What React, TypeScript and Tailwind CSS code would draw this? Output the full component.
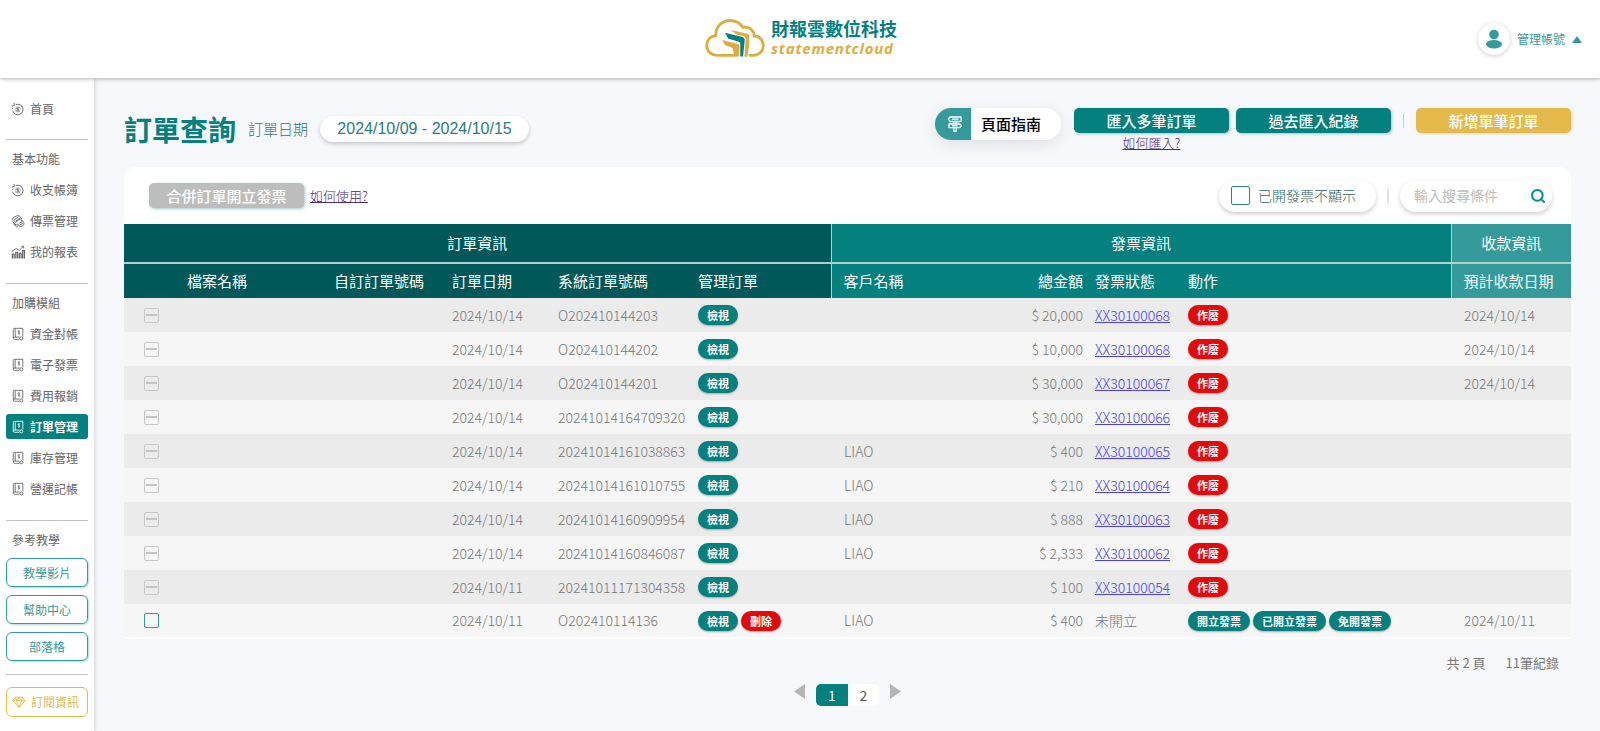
import type { ReactNode } from "react"
import { Search } from "lucide-react"

type Order = {
  date: string
  orderNo: string
  customer?: string
  amount: string
  invoice?: string
  payDate?: string
}

const orders: Order[] = [
  { date: "2024/10/14", orderNo: "O202410144203", amount: "$ 20,000", invoice: "XX30100068", payDate: "2024/10/14" },
  { date: "2024/10/14", orderNo: "O202410144202", amount: "$ 10,000", invoice: "XX30100068", payDate: "2024/10/14" },
  { date: "2024/10/14", orderNo: "O202410144201", amount: "$ 30,000", invoice: "XX30100067", payDate: "2024/10/14" },
  { date: "2024/10/14", orderNo: "20241014164709320", amount: "$ 30,000", invoice: "XX30100066" },
  { date: "2024/10/14", orderNo: "20241014161038863", customer: "LIAO", amount: "$ 400", invoice: "XX30100065" },
  { date: "2024/10/14", orderNo: "20241014161010755", customer: "LIAO", amount: "$ 210", invoice: "XX30100064" },
  { date: "2024/10/14", orderNo: "20241014160909954", customer: "LIAO", amount: "$ 888", invoice: "XX30100063" },
  { date: "2024/10/14", orderNo: "20241014160846087", customer: "LIAO", amount: "$ 2,333", invoice: "XX30100062" },
  { date: "2024/10/11", orderNo: "20241011171304358", amount: "$ 100", invoice: "XX30100054" },
  { date: "2024/10/11", orderNo: "O202410114136", customer: "LIAO", amount: "$ 400", payDate: "2024/10/11" },
]

function Logo() {
  return (
    <svg viewBox="0 0 60 40" className="h-10 w-15" fill="none" aria-hidden="true">
      <path
        d="M41 37.300c1.500-6 2-12 1.800-18M29 37.300H12.500C6 37.300 1.700 33 1.700 27.500 1.700 22 5.500 18.200 10.800 17.500 10.300 9 17 2.500 25 2.500c5.500 0 10.200 2.300 12.700 6.800 6-1.300 11.300 2.700 11.500 8.700 5 0 9.100 4.200 9.100 9.700S54 37.300 48.500 37.300H45"
        stroke="#dcae42"
        strokeWidth="2.800"
        strokeLinecap="round"
      />
      <path d="M25.500 12l16 3.600c2 .5 3 1.400 2.800 3.200l-2 19.700h-2.600l.9-17.500c0-1.500-.8-2.400-2.600-2.900L32 16.700z" fill="#dcae42" />
      <path d="M20 14.700l16.500 4c2.300.6 3.400 1.600 3.200 3.600L38 38.500h-2.800l.1-12.200c0-1.700-.7-2.600-2.500-3.100l-9.600-2.500z" fill="#04807f" />
      <path d="M17 22l14.500 3.500c2.200.6 3.200 1.600 3.100 3.500l-.6 9.500h-5l-.8-6.500c-.3-1.800-1-2.600-2.700-3.100L20 27.200z" fill="#dcae42" />
    </svg>
  )
}

function CoinIcon() {
  return (
    <svg viewBox="0 0 16 16" className="size-3.5" fill="none" stroke="currentColor" strokeWidth="1.100" aria-hidden="true">
      <path d="M5.500 3a6 6 0 1 1-3.600 7M3.800 3.900l-.3-2.900M1 4.600l2.800-.7M1.700 8a6 6 0 0 1 .4-1.600" />
      <circle cx="7.800" cy="8.500" r="3" strokeWidth=".5" />
      <path d="M9.100 7.200c-.6-.7-2.600-.7-2.600.3s2.600.7 2.600 1.800-2 1.200-2.700.4M7.800 6v5" strokeWidth=".9" />
    </svg>
  )
}

function VoucherIcon() {
  return (
    <svg viewBox="0 0 16 16" className="size-3.5" fill="none" stroke="currentColor" strokeWidth="1.100" aria-hidden="true">
      <path d="M1.200 6.200C3 3.500 5.500 2 9 1.800l3.500 3.700c-3 .2-5.500 1.800-7.300 4.500zM1.500 8.500 6 12.800l1.500-1.500M2.500 11 6.500 14.500l1.500-.8" />
      <path d="m3.500 6.800 5-3.500M5 8.300l5.200-3.500" />
      <path d="M11.500 7.200c2 .3 3.300 1.800 3.300 3.600s-1.500 3.500-3.500 3.500-3.300-1.400-3.300-3.200M9.500 10.200l4-1.500M10 12.300l3.500-1.500" />
    </svg>
  )
}

function ReportIcon() {
  return (
    <svg viewBox="0 0 16 16" className="size-3.5" fill="none" stroke="currentColor" strokeWidth="1.400" aria-hidden="true">
      <path d="M1.500 15.500v-5h2v5M5.500 15.500V8.500h2v7M9.500 15.500V9.500h2v6M13.300 15.500v-9h2v9" />
      <path d="m.8 7.500 5-3.500 3.700 2L14 1.800M11.800 1.500h2.700v2.500" strokeWidth="1" />
    </svg>
  )
}

function LedgerIcon() {
  return (
    <svg viewBox="0 0 16 16" className="size-3.5" fill="none" stroke="currentColor" strokeWidth="1" aria-hidden="true">
      <path d="M4.800 11.500V1.500h8.700v9.300M4.800 1.500h-.9A1.300 1.300 0 0 0 2.600 2.800v9.900c0-.7.6-1.200 1.300-1.200h6M2.600 12.700c0 .7.6 1.300 1.300 1.300h5.800" />
      <path d="M10.200 5c-.6-.8-2.200-.7-2.200.3s2.200.7 2.200 1.700-1.600 1.100-2.300.3M9.100 3.700v5" strokeWidth=".8" />
      <circle cx="11.800" cy="13" r="1.700" />
    </svg>
  )
}

function DiamondIcon() {
  return (
    <svg viewBox="0 0 16 16" className="size-3.5 shrink-0" fill="none" stroke="currentColor" strokeWidth="1" strokeLinejoin="round" aria-hidden="true">
      <path d="M4 2.500h8l3 4L8 14.500 1 6.500zM1 6.500h14M5 6.500l3 8 3-8M4 2.500l1 4 3-4 3 4 1-4" />
    </svg>
  )
}

function GuideIcon() {
  return (
    <svg viewBox="0 0 16 16" className="size-4" fill="none" stroke="currentColor" strokeWidth="1.300" strokeLinejoin="round" aria-hidden="true">
      <path d="M3 1h11v4.500H3L1.300 3.200zM5 3.200h6.500M2 8h10.500l2 1.800-2 1.900H2zM5 9.900h5.500M6.700 5.500V8M9.300 5.500V8M6.700 11.700v3.500h2.600v-3.500" />
    </svg>
  )
}

type NavItem = { label: string; icon: () => ReactNode; active?: boolean }

const basicItems: NavItem[] = [
  { label: "收支帳簿", icon: CoinIcon },
  { label: "傳票管理", icon: VoucherIcon },
  { label: "我的報表", icon: ReportIcon },
]

const moduleItems: NavItem[] = [
  { label: "資金對帳", icon: LedgerIcon },
  { label: "電子發票", icon: LedgerIcon },
  { label: "費用報銷", icon: LedgerIcon },
  { label: "訂單管理", icon: LedgerIcon, active: true },
  { label: "庫存管理", icon: LedgerIcon },
  { label: "營運記帳", icon: LedgerIcon },
]

function NavLink({ label, icon: Icon, active }: NavItem) {
  return (
    <a
      href="#"
      className={
        active
          ? "flex h-[25px] items-center gap-[5px] rounded-[3px] bg-[#04807f] pl-[5px] font-bold text-white"
          : "flex h-[25px] items-center gap-[5px] pl-[5px]"
      }
    >
      <Icon />
      {label}
    </a>
  )
}

function NavGroup({ title, items }: { title: string; items: NavItem[] }) {
  return (
    <section className="border-t border-[#c4c4c4] pt-[9px]">
      <h2 className="mb-2 pl-1.5 leading-5">{title}</h2>
      <nav className="flex flex-col gap-1.5">
        {items.map((item) => (
          <NavLink key={item.label} {...item} />
        ))}
      </nav>
    </section>
  )
}

function Sidebar() {
  return (
    <aside className="z-10 flex w-[94px] shrink-0 flex-col bg-white px-1.5 pt-[18px] text-[12px] text-[#666] shadow-[1px_0_4px_rgba(0,0,0,0.15)]">
      <div className="mb-[18px]">
        <NavLink label="首頁" icon={CoinIcon} />
      </div>
      <div className="flex flex-col gap-[19px]">
        <NavGroup title="基本功能" items={basicItems} />
        <NavGroup title="加購模組" items={moduleItems} />
        <section className="border-t border-[#c4c4c4] pt-[9px]">
          <h2 className="mb-2 pl-1.5 leading-5">參考教學</h2>
          <div className="flex flex-col gap-2">
            {["教學影片", "幫助中心", "部落格"].map((label) => (
              <a
                key={label}
                href="#"
                className="flex h-[29px] items-center justify-center rounded-md border border-[#359b9a] text-[#359b9a] shadow-[1px_1px_2px_rgba(4,128,127,0.3)]"
              >
                {label}
              </a>
            ))}
          </div>
        </section>
        <div className="-mt-1.5 border-t border-[#c4c4c4] pt-3">
          <a
            href="#"
            className="flex h-[30px] items-center gap-[5px] rounded-md border border-[#e6b94b] pl-[5px] text-[#e6b94b]"
          >
            <DiamondIcon />
            訂閱資訊
          </a>
        </div>
      </div>
    </aside>
  )
}

function Header() {
  return (
    <header className="z-20 grid h-[78px] shrink-0 grid-cols-[1fr_auto_1fr] items-center bg-white shadow-[0_1px_4px_rgba(0,0,0,0.3)]">
      <div />
      <a href="#" className="flex items-center gap-1.5 pb-[3px] pl-0.5">
        <Logo />
        <span className="flex flex-col">
          <span className="text-[18px] leading-[21px] font-bold text-[#04807f]">財報雲數位科技</span>
          <span className="font-['Open_Sans','Noto_Sans',sans-serif] text-[15px] leading-[18px] font-bold tracking-wider text-[#dcae42] italic">
            statementcloud
          </span>
        </span>
      </a>
      <button className="mr-[18px] flex items-center gap-[7px] justify-self-end text-[12px] text-[#359b9a]">
        <span className="flex size-8 items-center justify-center rounded-full bg-white shadow-[0_1px_4px_rgba(0,0,0,0.2)]">
          <svg viewBox="0 0 18 20" className="h-5 w-[18px]" fill="currentColor" aria-hidden="true">
            <circle cx="9" cy="5.500" r="4.800" />
            <ellipse cx="9" cy="15.300" rx="8" ry="4.200" />
          </svg>
        </span>
        管理帳號
        <svg viewBox="0 0 10 7" className="h-[7px] w-2.5" fill="currentColor" aria-hidden="true">
          <path d="M5 0l5 7H0z" />
        </svg>
      </button>
    </header>
  )
}

function Pill({ children, danger }: { children: ReactNode; danger?: boolean }) {
  return (
    <button
      className={
        danger
          ? "h-5 rounded-full bg-[#e10b0b] px-[9px] text-[11px] leading-5 font-bold text-white shadow-[0_1px_2px_rgba(0,0,0,0.3)]"
          : "h-5 rounded-full bg-[#04807f] px-[9px] text-[11px] leading-5 font-bold text-white shadow-[0_1px_2px_rgba(0,0,0,0.3)]"
      }
    >
      {children}
    </button>
  )
}

function OrderTable() {
  return (
    <table className="w-full table-fixed border-b-2 border-white text-left">
      <colgroup>
        <col className="w-[57px]" />
        <col className="w-[147px]" />
        <col className="w-[118px]" />
        <col className="w-[106px]" />
        <col className="w-[140px]" />
        <col className="w-[139px]" />
        <col className="w-[150px]" />
        <col className="w-[108px]" />
        <col className="w-[93px]" />
        <col />
        <col className="w-[120px]" />
      </colgroup>
      <thead className="text-[15px] text-white">
        <tr className="h-[39px] border-b-2 border-[#b3cfce] text-center">
          <th colSpan={6} className="bg-[#005958] font-normal">訂單資訊</th>
          <th colSpan={4} className="border-x border-[#b3cfce] bg-[#04807f] font-normal">發票資訊</th>
          <th className="bg-[#359b9a] font-normal">收款資訊</th>
        </tr>
        <tr className="h-[35px] whitespace-nowrap">
          <td className="bg-[#005958]" />
          <th className="bg-[#005958] px-1.5 font-normal">檔案名稱</th>
          <th className="bg-[#005958] px-1.5 font-normal">自訂訂單號碼</th>
          <th className="bg-[#005958] px-1.5 font-normal">訂單日期</th>
          <th className="bg-[#005958] px-1.5 font-normal">系統訂單號碼</th>
          <th className="bg-[#005958] px-1.5 font-normal">管理訂單</th>
          <th className="border-l border-[#b3cfce] bg-[#04807f] pl-3 font-normal">客戶名稱</th>
          <th className="bg-[#04807f] px-1.5 text-right font-normal">總金額</th>
          <th className="bg-[#04807f] px-1.5 font-normal">發票狀態</th>
          <th className="bg-[#04807f] px-1.5 font-normal">動作</th>
          <th className="border-l border-[#b3cfce] bg-[#359b9a] pl-3 font-normal">預計收款日期</th>
        </tr>
      </thead>
      <tbody className="text-[14px] font-light text-[#777]">
        {orders.map((order) => (
          <tr key={order.orderNo} className="h-[34px] odd:bg-[#ebebeb] even:bg-[#f6f6f6]">
            <td className="pl-5">
              {order.invoice ? (
                <span className="grid w-[15px] place-items-center">
                  <input
                    type="checkbox"
                    disabled
                    aria-label={order.orderNo}
                    className="col-start-1 row-start-1 size-[15px] appearance-none rounded-[2px] border border-[#c8c8c8]"
                  />
                  <span className="col-start-1 row-start-1 h-0.5 w-[11px] bg-[#c4c4c4]" />
                </span>
              ) : (
                <input
                  type="checkbox"
                  aria-label={order.orderNo}
                  className="block size-[15px] appearance-none rounded-[2px] border border-[#359b9a]"
                />
              )}
            </td>
            <td />
            <td />
            <td className="px-1.5">{order.date}</td>
            <td className="px-1.5">{order.orderNo}</td>
            <td className="px-1.5">
              <div className="flex gap-[3px]">
                <Pill>檢視</Pill>
                {!order.invoice && <Pill danger>刪除</Pill>}
              </div>
            </td>
            <td className="pl-[13px]">{order.customer}</td>
            <td className="px-1.5 text-right">{order.amount}</td>
            <td className="px-1.5">
              {order.invoice ? (
                <a href="#" className="text-[#4a40ea] underline">{order.invoice}</a>
              ) : (
                "未開立"
              )}
            </td>
            <td className="px-1.5">
              <div className="flex gap-[3px]">
                {order.invoice ? (
                  <Pill danger>作廢</Pill>
                ) : (
                  <>
                    <Pill>開立發票</Pill>
                    <Pill>已開立發票</Pill>
                    <Pill>免開發票</Pill>
                  </>
                )}
              </div>
            </td>
            <td className="pl-[13px]">{order.payDate}</td>
          </tr>
        ))}
      </tbody>
    </table>
  )
}

function Toolbar() {
  return (
    <div className="flex items-start justify-between pt-3.5">
      <div className="flex items-center pt-1.5">
        <h1 className="text-[28px] leading-[30px] font-bold text-[#04807f]">訂單查詢</h1>
        <span className="ml-3 text-[15px] font-light text-[#2f7574]">訂單日期</span>
        <button className="ml-3 h-[26px] w-[209px] rounded-full bg-white font-['Liberation_Sans',Arial,sans-serif] text-[16px] leading-[26px] text-[#2c7c7b] shadow-[0_2px_4px_rgba(0,0,0,0.2)]">
          2024/10/09 - 2024/10/15
        </button>
      </div>
      <div className="flex items-start">
        <button className="mr-[13px] flex h-8 items-center overflow-hidden rounded-full bg-white text-[15px] font-medium text-black shadow-[0_4px_16px_rgba(0,0,0,0.1)]">
          <span className="flex h-8 w-9 items-center justify-center bg-[#359b9a] pl-1 text-white">
            <GuideIcon />
          </span>
          <span className="w-[90px] pr-2.5">頁面指南</span>
        </button>
        <div className="flex flex-col items-center">
          <button className="h-[25px] w-[155px] rounded-[5px] bg-[#04807f] text-[15px] leading-[25px] font-medium text-white shadow-[1px_1px_3px_rgba(4,128,127,0.4)]">
            匯入多筆訂單
          </button>
          <a href="#" className="text-[13px] leading-5 font-light text-[#4b2a80] underline">如何匯入?</a>
        </div>
        <button className="ml-[7px] h-[25px] w-[155px] rounded-[5px] bg-[#04807f] text-[15px] leading-[25px] font-medium text-white shadow-[1px_1px_3px_rgba(4,128,127,0.4)]">
          過去匯入紀錄
        </button>
        <span className="mx-3 mt-1.5 h-3.5 w-px bg-[#ccc]" />
        <button className="h-[25px] w-[155px] rounded-[5px] bg-[#e6b94b] text-[15px] leading-[25px] font-medium text-white shadow-[1px_1px_3px_rgba(230,185,75,0.4)]">
          新增單筆訂單
        </button>
      </div>
    </div>
  )
}

function Filters() {
  return (
    <div className="flex h-[57px] items-center justify-between pr-[19px] pl-[25px]">
      <div className="flex items-center gap-1.5">
        <button className="h-[25px] w-[155px] rounded-[5px] bg-[#bdbdbd] text-[15px] leading-[25px] font-medium text-white shadow-[1px_1px_3px_rgba(4,128,127,0.4)]">
          合併訂單開立發票
        </button>
        <a href="#" className="text-[13px] font-light text-[#4b2a80] underline">如何使用?</a>
      </div>
      <div className="flex items-center">
        <label className="flex h-8 w-[157px] items-center gap-2 rounded-full bg-white pl-3 text-[14px] font-light text-[#2f6564] shadow-[0_2px_4px_rgba(0,0,0,0.2)]">
          <input type="checkbox" className="size-[19px] appearance-none rounded-[2px] border border-[#2c8483]" />
          已開發票不顯示
        </label>
        <span className="mx-[11px] h-3.5 w-0.5 bg-[#e2e2e2]" />
        <label className="flex h-8 w-[152px] items-center rounded-full bg-white pr-1.5 pl-3.5 shadow-[0_2px_4px_rgba(0,0,0,0.2)]">
          <input
            type="text"
            aria-label="輸入搜尋條件"
            placeholder="輸入搜尋條件"
            className="min-w-0 flex-1 text-[14px] outline-none placeholder:text-[#bdbdbd]"
          />
          <Search className="size-4 text-[#04908f]" strokeWidth={3} />
        </label>
      </div>
    </div>
  )
}

function Pagination() {
  return (
    <nav className="flex items-start justify-center text-[#b5b5b5]">
      <button aria-label="上一頁">
        <svg viewBox="0 0 11 15" className="h-[15px] w-[11px]" fill="currentColor">
          <path d="M11 0v15L0 7.500z" />
        </svg>
      </button>
      <button className="ml-[11px] h-[22px] w-8 rounded-l-[5px] bg-[#04807f] text-[14px] leading-[22px] text-white">1</button>
      <button className="mr-[11px] h-[22px] w-[31px] rounded-r-[5px] bg-white text-[14px] leading-[22px] text-[#555]">2</button>
      <button aria-label="下一頁">
        <svg viewBox="0 0 11 15" className="h-[15px] w-[11px]" fill="currentColor">
          <path d="M0 0v15l11-7.500z" />
        </svg>
      </button>
    </nav>
  )
}

export default function App() {
  return (
    <div className="flex min-h-screen flex-col bg-[#f7f8fb] font-['Noto_Sans_CJK_TC',sans-serif]">
      <Header />
      <div className="flex flex-1">
        <Sidebar />
        <main className="min-w-0 flex-1 pt-4 pr-[29px] pl-[30px]">
          <Toolbar />
          <div className="mt-3.5 rounded-t-xl bg-white">
            <Filters />
            <OrderTable />
          </div>
          <div className="mt-3.5 mb-[11px] flex justify-end gap-5 pr-3 text-[13px] leading-5 text-[#777]">
            <span>共 2 頁</span>
            <span>11筆紀錄</span>
          </div>
          <Pagination />
        </main>
      </div>
    </div>
  )
}
